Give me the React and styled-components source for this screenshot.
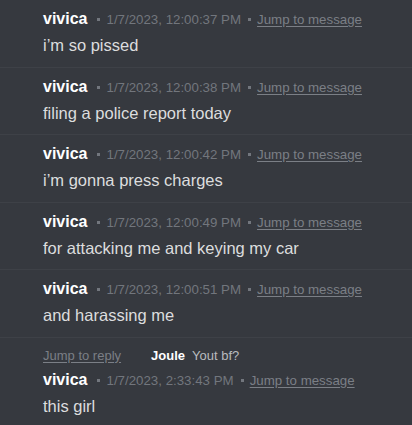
import React from 'react'
import styled, { createGlobalStyle } from 'styled-components'

const GlobalStyle = createGlobalStyle`
  html, body {
    margin: 0;
    padding: 0;
    background: #36393f;
  }
  body {
    font-family: "Liberation Sans", Arial, sans-serif;
    min-height: 100vh;
  }
`

const messages = [
  { time: '1/7/2023, 12:00:37 PM', text: 'i’m so pissed' },
  { time: '1/7/2023, 12:00:38 PM', text: 'filing a police report today' },
  { time: '1/7/2023, 12:00:42 PM', text: 'i’m gonna press charges' },
  { time: '1/7/2023, 12:00:49 PM', text: 'for attacking me and keying my car' },
  { time: '1/7/2023, 12:00:51 PM', text: 'and harassing me' },
  {
    time: '1/7/2023, 2:33:43 PM',
    text: 'this girl',
    reply: { author: 'Joule', text: 'Yout bf?' },
  },
]

const Feed = styled.div`
  display: flex;
  flex-direction: column;
  background: #36393f;
  min-height: 100vh;
`

const Row = styled.div`
  display: flex;
  flex-direction: column;
  gap: 4px;
  padding: 8px 0 10.5px 43px;
  border-bottom: 1px solid ${p => (p.$last ? 'transparent' : '#3e4147')};
`

const ReplyLine = styled.div`
  display: flex;
  align-items: baseline;
  height: 19px;
  line-height: 20px;
  font-size: 13px;
`

const ReplyAuthor = styled.span`
  margin-left: 30px;
  color: #ffffff;
  font-weight: 700;
`

const ReplyText = styled.span`
  margin-left: 7px;
  color: #b9bbbe;
`

const Header = styled.div`
  display: flex;
  align-items: baseline;
  height: 22px;
  line-height: 22px;
`

const Name = styled.span`
  color: #ffffff;
  font-size: 16px;
  font-weight: 700;
  margin-right: 3px;
`

const Meta = styled.span`
  color: #72767d;
  font-size: 13.3px;
`

const Dot = styled.span`
  display: inline-block;
  width: 3px;
  height: 3px;
  background: #72767d;
  margin: 0 6px 0 7px;
  position: relative;
  top: -3px;
`

const Link = styled.a`
  color: #7b7f86;
  font-size: ${p => (p.$small ? '13px' : '13.3px')};
  text-decoration: underline;
  text-underline-offset: 2px;
  cursor: pointer;
`

const Text = styled.div`
  color: #dcddde;
  font-size: 16.5px;
  line-height: 22px;
  height: 22px;
`

export default function App() {
  return (
    <>
      <GlobalStyle />
      <Feed>
        {messages.map((m, i) => (
          <Row key={i} $last={i === messages.length - 1}>
            {m.reply && (
              <ReplyLine>
                <Link $small>Jump to reply</Link>
                <ReplyAuthor>{m.reply.author}</ReplyAuthor>
                <ReplyText>{m.reply.text}</ReplyText>
              </ReplyLine>
            )}
            <Header>
              <Name>vivica</Name>
              <Dot />
              <Meta>{m.time}</Meta>
              <Dot />
              <Link>Jump to message</Link>
            </Header>
            <Text>{m.text}</Text>
          </Row>
        ))}
      </Feed>
    </>
  )
}
